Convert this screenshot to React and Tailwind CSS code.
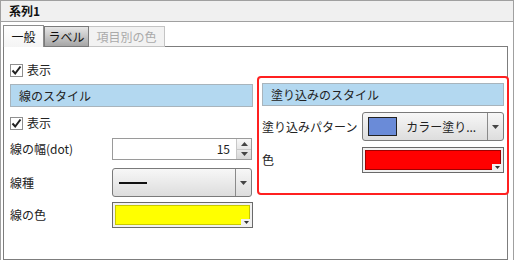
const font = { fontFamily: '"Noto Sans CJK JP", "Noto Sans", sans-serif' };

const CheckBox = ({ label }) => (
  <div className="flex items-center gap-[4px] h-[16px]">
    <div className="w-[13px] h-[13px] border border-[#8f8f8f] bg-white flex items-center justify-center">
      <svg width="11" height="11" viewBox="0 0 11 11">
        <path d="M1.5 5.5 L4.2 8.5 L9.5 1.5" fill="none" stroke="#222" strokeWidth="2" />
      </svg>
    </div>
    <span className="text-[12px] text-[#222]">{label}</span>
  </div>
);

const SectionHeader = ({ children }) => (
  <div className="h-[23px] bg-[#b3d8f0] border border-[#a8b4bc] flex items-center pl-[8px] text-[12px] text-[#222]">
    {children}
  </div>
);

const DownArrow = () => (
  <svg width="7" height="4" viewBox="0 0 7 4">
    <path d="M0 0 H7 L3.5 4 Z" fill="#444" />
  </svg>
);

const Spinner = ({ value }) => (
  <div className="flex w-[140px] h-[22px] border border-[#9a9a9a] bg-white">
    <div className="flex-1 flex items-center justify-end pr-[6px] text-[12px] text-[#222]">{value}</div>
    <div className="w-[15px] flex flex-col border-l border-[#c8c8c8]">
      <div className="flex-1 flex items-center justify-center bg-gradient-to-b from-[#f8f8f8] to-[#e6e6e6] border-b border-[#c8c8c8]">
        <svg width="7" height="4" viewBox="0 0 7 4"><path d="M0 4 H7 L3.5 0 Z" fill="#444" /></svg>
      </div>
      <div className="flex-1 flex items-center justify-center bg-gradient-to-b from-[#e8e8e8] to-[#d6d6d6]">
        <DownArrow />
      </div>
    </div>
  </div>
);

const Combo = ({ children, className = '' }) => (
  <div className={`flex h-[29px] border border-[#7a7a7a] rounded-[3px] bg-gradient-to-b from-[#f7f7f7] to-[#dddddd] ${className}`}>
    <div className="flex-1 flex items-center">{children}</div>
    <div className="w-[16px] flex items-center justify-center border-l border-[#8a8a8a]">
      <DownArrow />
    </div>
  </div>
);

const ColorBox = ({ color, border, className = '' }) => (
  <div className={`relative h-[26px] border border-[#6a6a6a] bg-[#f0f0f0] p-[2px] ${className}`}>
    <div className={`h-full border ${border} ${color}`} />
    <div className="absolute right-[1px] bottom-[1px] w-[10px] h-[7px] bg-[#f0f0f0] flex items-center justify-center">
      <svg width="5" height="3" viewBox="0 0 5 3"><path d="M0 0 H5 L2.5 3 Z" fill="#333" /></svg>
    </div>
  </div>
);

export default function App() {
  return (
    <div style={font} className="w-[514px] h-[260px] overflow-hidden bg-white border-x border-t border-[#a0a0a0] flex flex-col">
      <div className="h-[21px] shrink-0 bg-[#f0f0f0] border-b border-[#a0a0a0] flex items-center pl-[8px] text-[12px] font-bold text-[#111]">
        系列1
      </div>
      <div className="flex-1 flex flex-col pl-[2px] pr-[5px] pt-[3px]">
        <div className="flex h-[22px] items-end relative z-10">
          <div className="h-[22px] w-[41px] border border-[#8c8c8c] border-b-0 bg-gradient-to-b from-white to-[#f4f4f4] flex items-center justify-center text-[12px] text-[#111]">
            一般
          </div>
          <div className="h-[21px] w-[45px] border border-[#7a7a7a] bg-gradient-to-b from-[#e6e6e6] to-[#a6a6a6] flex items-center justify-center text-[12px] text-[#111]">
            ラベル
          </div>
          <div className="h-[21px] w-[76px] border border-[#c4c4c4] border-l-0 bg-[#f2f2f2] flex items-center justify-center text-[12px] text-[#aaaaaa]">
            項目別の色
          </div>
        </div>
        <div className="flex-1 -mt-[1px] border border-[#7d7d7d] bg-white flex pl-[6px] pt-[15px]">
          <div className="w-[243px] flex flex-col">
            <CheckBox label="表示" />
            <div className="mt-[6px]">
              <SectionHeader>線のスタイル</SectionHeader>
            </div>
            <div className="mt-[8px]">
              <CheckBox label="表示" />
            </div>
            <div className="mt-[7px] flex items-center">
              <span className="w-[102px] text-[12px] text-[#222]">線の幅(dot)</span>
              <Spinner value="15" />
            </div>
            <div className="mt-[8px] flex items-center">
              <span className="w-[102px] text-[12px] text-[#222]">線種</span>
              <Combo className="w-[140px]">
                <div className="ml-[6px] w-[28px] h-[2px] bg-[#111]" />
              </Combo>
            </div>
            <div className="mt-[5px] flex items-center">
              <span className="w-[102px] text-[12px] text-[#222]">線の色</span>
              <ColorBox className="w-[142px]" color="bg-[#ffff00]" border="border-[#c8c800]" />
            </div>
          </div>
          <div className="ml-[4px] mt-[14px] w-[252px] h-[119px] border-2 border-[#ff2020] rounded-[4px] flex flex-col px-[3px] pt-[5px]">
            <SectionHeader>塗り込みのスタイル</SectionHeader>
            <div className="mt-[6px] flex items-center">
              <span className="w-[101px] text-[12px] text-[#222]">塗り込みパターン</span>
              <Combo className="w-[143px]">
                <div className="ml-[5px] w-[29px] h-[19px] bg-[#6a8bd8] border border-[#222]" />
                <span className="ml-[9px] text-[12px] text-[#222]">カラー塗り...</span>
              </Combo>
            </div>
            <div className="mt-[6px] flex items-center">
              <span className="w-[101px] text-[12px] text-[#222]">色</span>
              <ColorBox className="w-[143px]" color="bg-[#ff0000]" border="border-[#a00000]" />
            </div>
          </div>
        </div>
      </div>
    </div>
  );
}
